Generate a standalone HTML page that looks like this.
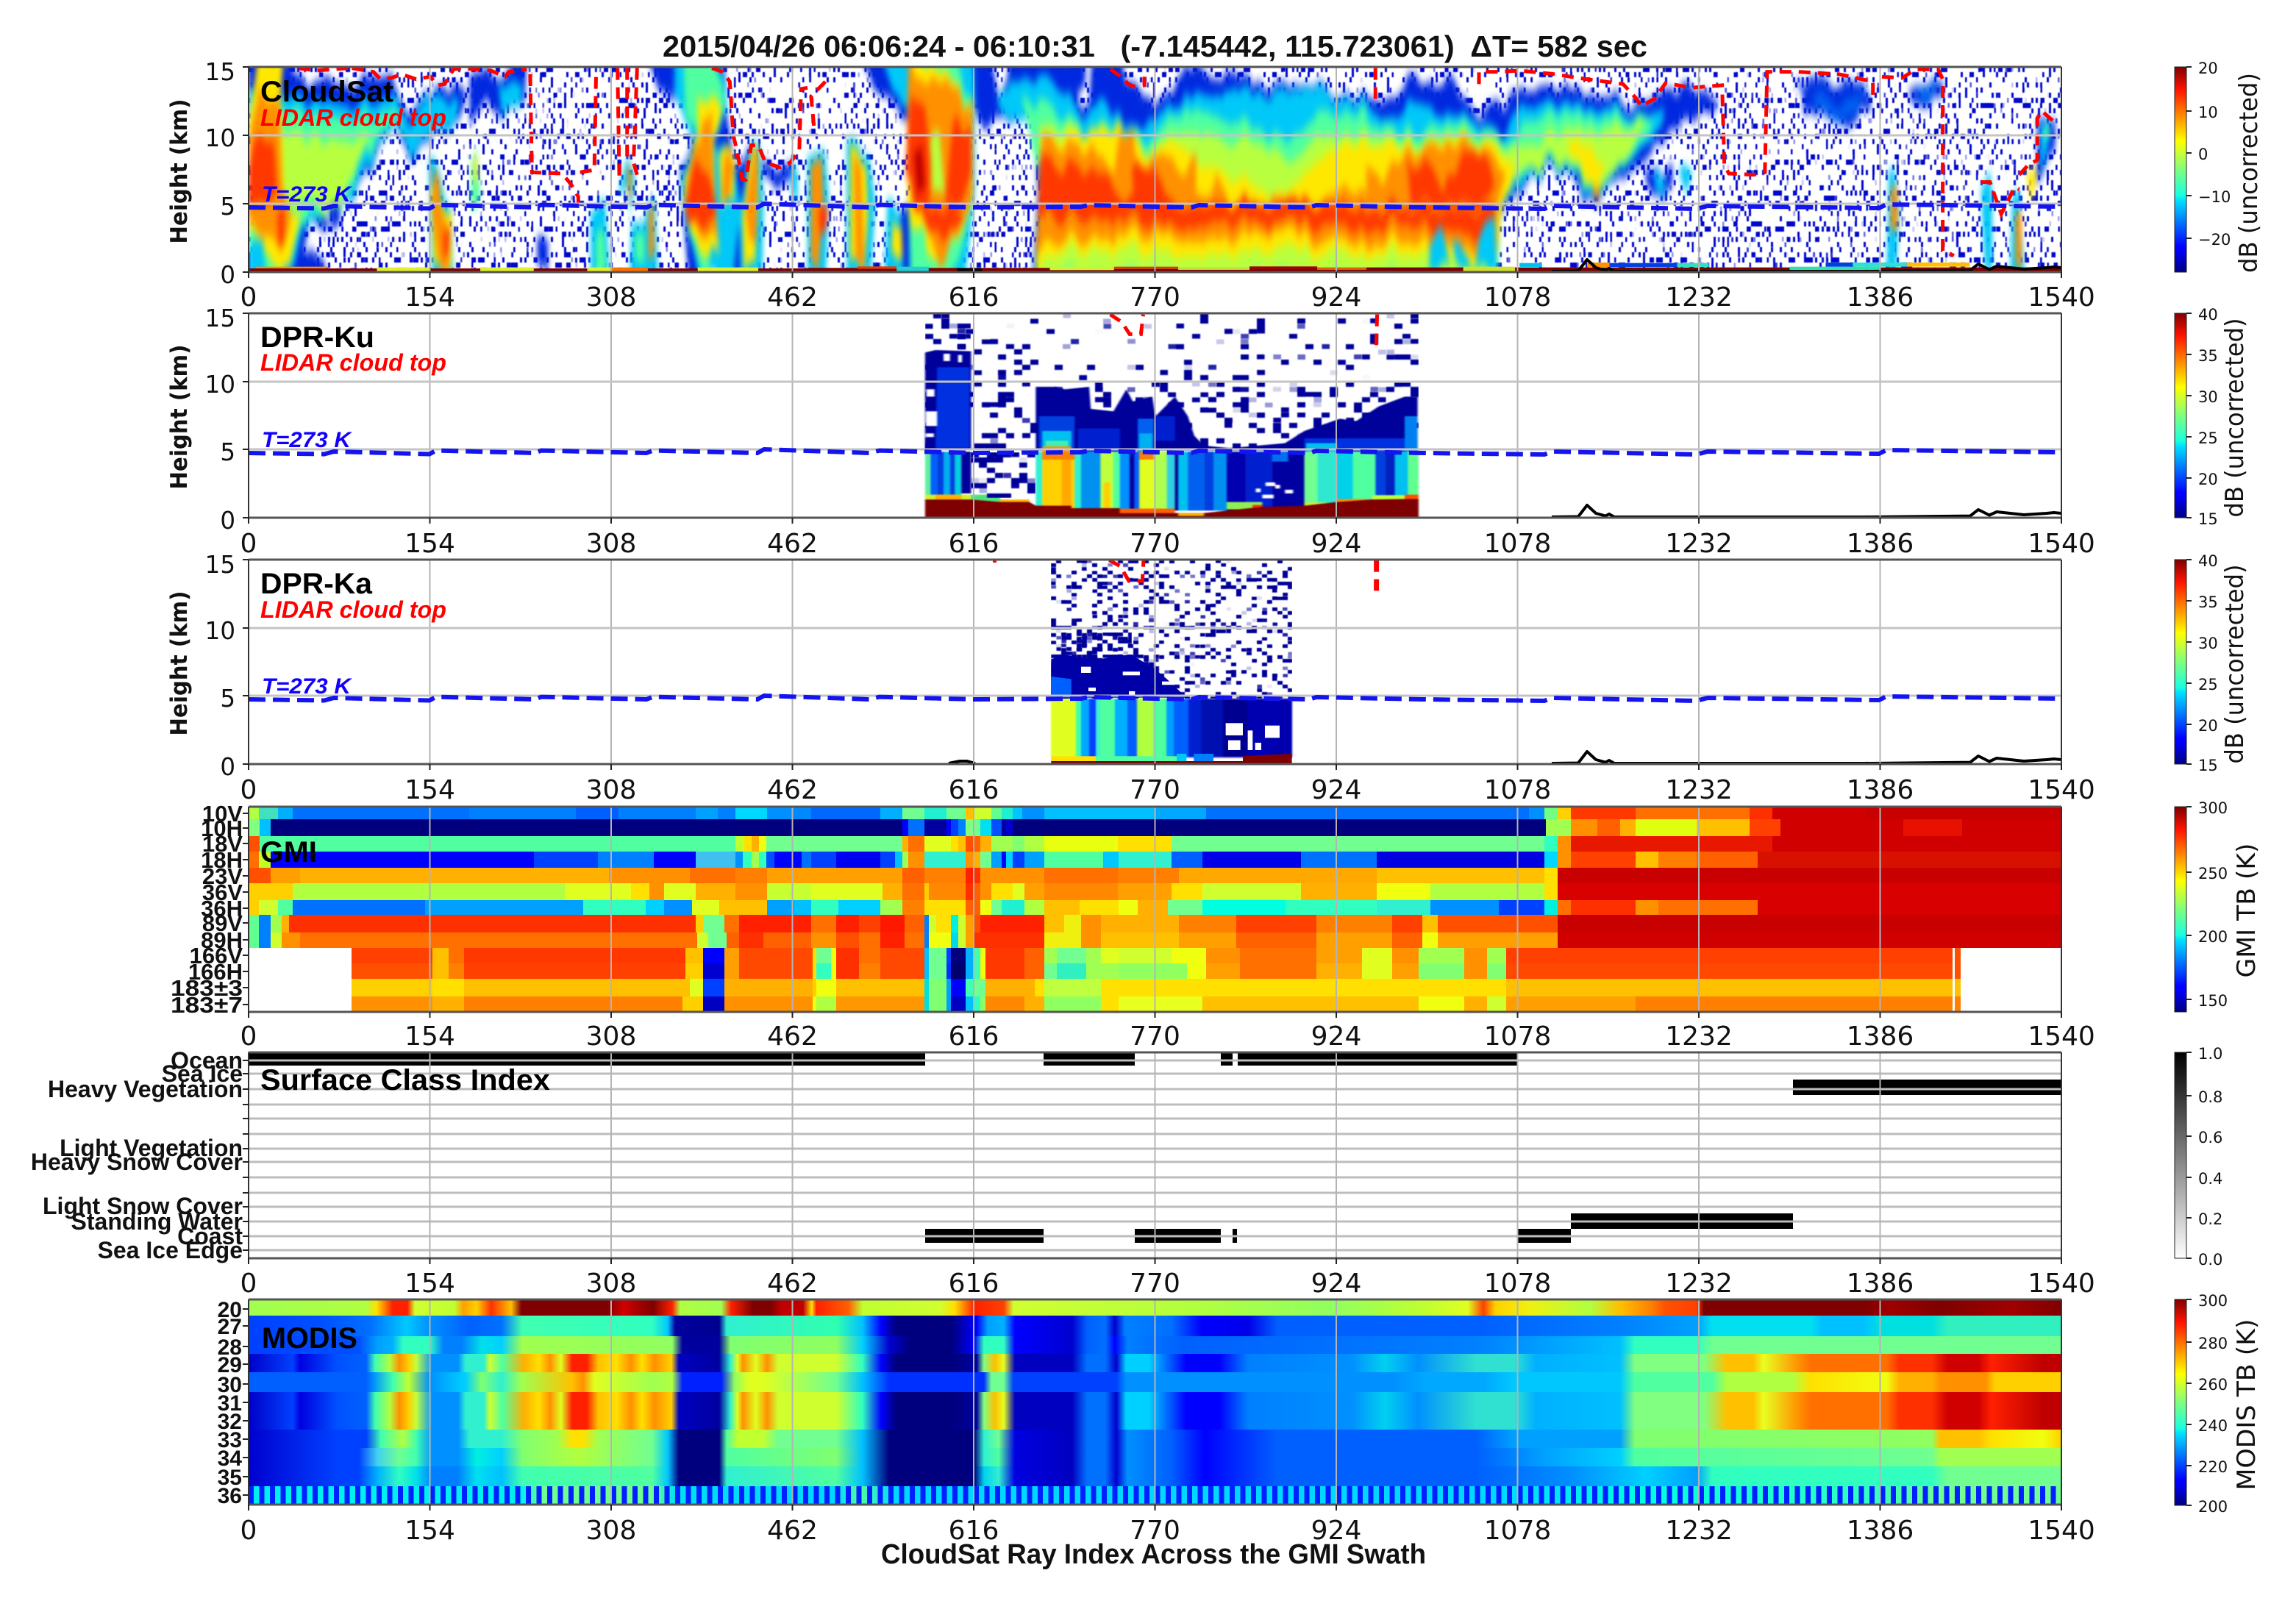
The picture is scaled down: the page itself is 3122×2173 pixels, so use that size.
<!DOCTYPE html>
<html><head><meta charset="utf-8"><title>CloudSat GMI</title>
<style>
html,body{margin:0;padding:0;background:#fff}
#p{position:relative;width:3122px;height:2173px;overflow:hidden;background:#fff}
.r{position:absolute;left:338px;width:2465px}
.x{position:absolute}
svg{position:absolute;left:0;top:0}
.m29{background:linear-gradient(90deg,#0000c8 0,#0040ff 60px,#0000e0 70px,#0050ff 120px,#0060ff 160px,#40ffb0 172px,#b0ff40 192px,#ff9000 205px,#ffd000 218px,#c0ff40 228px,#0090ff 250px,#0090ff 285px,#30f0d0 295px,#30f0d0 320px,#d0ff30 328px,#50ffa0 345px,#ffb000 375px,#ffe000 395px,#ff9000 410px,#e0ff20 425px,#ff2000 440px,#ff2000 460px,#ffc000 475px,#ffe000 500px,#ff9000 520px,#ffe000 535px,#ff9000 552px,#ffd000 575px,#0000c0 585px,#00009f 640px,#30f0d0 655px,#e0ff20 665px,#ff9000 672px,#e0ff20 690px,#ff9000 705px,#d0ff30 720px,#d0ff30 799px,#30ffc0 835px,#0000ff 860px,#00007f 880px,#00007f 956px,#00009f 990px,#80ff80 1000px,#ffc000 1015px,#e0ff20 1027px,#0000c0 1042px,#0000c0 1120px,#0070ff 1140px,#0070ff 1165px,#0000d0 1180px,#00d0ff 1193px,#00d0ff 1224px,#0000ff 1275px,#0000ff 1320px,#0080ff 1359px,#0090ff 1500px,#00d0f0 1545px,#0090ff 1590px,#30e0d0 1669px,#30e0d0 1721px,#00b0ff 1750px,#00c0ff 1865px,#80ff80 1885px,#80ff80 1979px,#ffc000 2010px,#ffc000 2046px,#e8ff20 2060px,#ff9000 2108px,#ff7000 2124px,#ff7000 2227px,#ff3000 2245px,#ff3000 2289px,#d00000 2310px,#d00000 2352px,#ff2000 2370px,#c00000 2440px,#c00000 2465px)}
.tk{font:36px "DejaVu Sans",sans-serif;fill:#111;text-anchor:middle}
.yt{font:32.5px "DejaVu Sans",sans-serif;fill:#111;text-anchor:end}
.cb{font:21px "DejaVu Sans",sans-serif;fill:#111}
.yl{font:bold 31px "DejaVu Sans",sans-serif;fill:#111;text-anchor:middle}
.cl{font:34px "DejaVu Sans",sans-serif;fill:#111;text-anchor:middle}
.bl{font:bold 40px "Liberation Sans",sans-serif;fill:#000}
.li{font:italic bold 32px "Liberation Sans",sans-serif;fill:#f00}
.tt{font:italic bold 30px "Liberation Sans",sans-serif;fill:#10f}
.gl{font:bold 31px "Liberation Sans",sans-serif;fill:#111;text-anchor:end}
.sl{font:bold 32px "Liberation Sans",sans-serif;fill:#111;text-anchor:end}
.ml{font:bold 30px "Liberation Sans",sans-serif;fill:#111;text-anchor:end}
.B{fill:#0028e0}.C{fill:#00c8f8}.G{fill:#50ffa0}.L{fill:#b8ff40}.Y{fill:#ffe800}.O{fill:#ff9000}.R{fill:#ff3800}.D{fill:#c00000}
.rd{fill:none;stroke:#f00;stroke-width:5;stroke-dasharray:16 10;vector-effect:non-scaling-stroke}
.k{fill:#7f0000}
</style></head><body><div id="p">

<!-- GMI -->
<div class="r" style="top:1097px;height:17px;background:linear-gradient(90deg,#b0ff40 0 14px,#40e0c0 0 40px,#00b0ff 0 60px,#0070ff 0 300px,#0080ff 0 445px,#0060ff 0 503px,#0080ff 0 608px,#00a0ff 0 638px,#0080ff 0 662px,#00d8ff 0 705px,#0090ff 0 739px,#0088ff 0 765px,#0068ff 0 859px,#00b0ff 0 889px,#70ff90 0 919px,#20f0d0 0 949px,#70ff90 0 975px,#ffc000 0 987px,#d0ff30 0 1010px,#60ff90 0 1024px,#20f0d0 0 1039px,#00c8ff 0 1052px,#0090ff 0 1082px,#00c0ff 0 1234px,#00a8ff 0 1302px,#0070ff 0 1741px,#0090ff 0 1762px,#70ff80 0 1780px,#ffd000 0 1798px,#ff3800 0 1886px,#ff7000 0 2041px,#ff3000 0 2072px,#d00000 0 2200px,#c80000 0 2465px)"></div>
<div class="r" style="top:1114px;height:23px;background:linear-gradient(90deg,#80ff80 0 15px,#00c0ff 0 30px,#00007f 0 889px,#0000ff 0 897px,#0070ff 0 919px,#00009f 0 949px,#0000ff 0 955px,#0040ff 0 965px,#0080ff 0 975px,#80ff80 0 987px,#70ff90 0 995px,#00e0f0 0 1010px,#0050ff 0 1024px,#00009f 0 1030px,#0000d0 0 1039px,#00007f 0 1764px,#a0ff50 0 1798px,#ff9000 0 1834px,#ff6000 0 1865px,#ffb000 0 1886px,#e0ff10 0 1969px,#ffc000 0 2041px,#ff4000 0 2083px,#d00000 0 2250px,#e81000 0 2330px,#d00000 0 2465px)"></div>
<div class="r" style="top:1137px;height:21px;background:linear-gradient(90deg,#ff5000 0 15px,#50ffa0 0 662px,#c0ff30 0 674px,#ffe000 0 684px,#ffb000 0 694px,#f0ff10 0 704px,#70ff90 0 889px,#ffb000 0 897px,#ff7000 0 919px,#e0ff20 0 955px,#ffe000 0 965px,#ffc000 0 975px,#ff5000 0 987px,#ff6000 0 995px,#ffb000 0 1010px,#a0ff50 0 1039px,#80ff70 0 1055px,#b0ff40 0 1082px,#e8ff10 0 1182px,#ffe000 0 1255px,#70ff90 0 1762px,#30ffc0 0 1780px,#ff9000 0 1798px,#e81800 0 2072px,#d00000 0 2465px)"></div>
<div class="r" style="top:1158px;height:22px;background:linear-gradient(90deg,#ff7000 0 14px,#c0ff20 0 30px,#0000ff 0 388px,#0040ff 0 475px,#0080ff 0 551px,#0000ff 0 608px,#40c0f0 0 662px,#0090ff 0 672px,#30ffc0 0 684px,#a0ff50 0 694px,#30ffc0 0 704px,#0050ff 0 715px,#0000ff 0 752px,#0070ff 0 765px,#0040ff 0 799px,#0000f0 0 859px,#0040ff 0 879px,#00c0ff 0 889px,#a0ff50 0 897px,#ff9000 0 919px,#30f0d0 0 975px,#ff9000 0 987px,#ffb000 0 995px,#70ff90 0 1010px,#00a0ff 0 1024px,#0000ff 0 1030px,#00d0ff 0 1039px,#0040ff 0 1055px,#00a0ff 0 1082px,#50ffa0 0 1162px,#00c8ff 0 1183px,#30f0d0 0 1255px,#0060ff 0 1297px,#0000e8 0 1431px,#0070ff 0 1534px,#0000e0 0 1762px,#00d8ff 0 1780px,#ff9000 0 1798px,#ff4000 0 1886px,#ffc000 0 1917px,#ff8000 0 1969px,#ff6000 0 2052px,#d81000 0 2465px)"></div>
<div class="r" style="top:1180px;height:21px;background:linear-gradient(90deg,#ff5000 0 30px,#ffa000 0 70px,#ffb000 0 490px,#ff9000 0 600px,#ff7000 0 662px,#ff8000 0 705px,#ffa000 0 889px,#ff6000 0 919px,#ff8000 0 975px,#ff2000 0 987px,#ff3000 0 995px,#ff9000 0 1082px,#ff7000 0 1182px,#ff8000 0 1265px,#ffa800 0 1534px,#ffc000 0 1762px,#ffe000 0 1780px,#c80000 0 2465px)"></div>
<div class="r" style="top:1201px;height:23px;background:linear-gradient(90deg,#ffd000 0 60px,#b0ff40 0 430px,#e0ff20 0 520px,#ffe000 0 545px,#ff9000 0 565px,#e0ff20 0 608px,#ffb000 0 662px,#ff9000 0 705px,#c8ff30 0 765px,#e0ff20 0 862px,#ffb000 0 889px,#ff7000 0 919px,#ffd000 0 925px,#ff8800 0 975px,#ff3000 0 987px,#ff6000 0 995px,#ff9000 0 1010px,#ffe000 0 1039px,#e0ff20 0 1055px,#ffa000 0 1082px,#ff8800 0 1182px,#ffa000 0 1255px,#ffe000 0 1297px,#d0ff30 0 1431px,#ffb000 0 1534px,#f0ff10 0 1607px,#b0ff40 0 1762px,#ffe000 0 1780px,#d80000 0 2465px)"></div>
<div class="r" style="top:1224px;height:20px;background:linear-gradient(90deg,#ffd000 0 14px,#d0ff30 0 40px,#50ffa0 0 60px,#0070ff 0 240px,#00a0ff 0 455px,#30ffc0 0 540px,#00d0ff 0 565px,#0090ff 0 603px,#e0ff20 0 640px,#ffc000 0 705px,#00a0ff 0 742px,#00c0ff 0 765px,#30ffc0 0 802px,#00d0ff 0 859px,#a0ff50 0 889px,#ff8000 0 919px,#ffe000 0 975px,#ff6000 0 995px,#f0ff10 0 1010px,#70ff90 0 1024px,#20f0d0 0 1055px,#b0ff40 0 1082px,#ffc000 0 1130px,#ffe000 0 1183px,#f0ff10 0 1209px,#ffb000 0 1250px,#70ff90 0 1297px,#00ffe0 0 1410px,#30ffc0 0 1534px,#30f0d0 0 1607px,#0090ff 0 1700px,#0040ff 0 1762px,#00f0e0 0 1780px,#ff7000 0 1798px,#ff3000 0 1886px,#ff9000 0 1917px,#ff7000 0 2052px,#d80000 0 2465px)"></div>
<div class="r" style="top:1244px;height:24px;background:linear-gradient(90deg,#60ff90 0 14px,#0080ff 0 30px,#a0ff50 0 45px,#ffb000 0 55px,#ff3000 0 608px,#ffd000 0 618px,#70ff90 0 647px,#ff7000 0 667px,#ff2000 0 765px,#ff7000 0 799px,#ff2000 0 830px,#ff4000 0 859px,#ff1800 0 892px,#ff6000 0 919px,#0080ff 0 925px,#d0ff30 0 935px,#ffe000 0 955px,#00f0e0 0 965px,#d0ff30 0 975px,#ffa000 0 987px,#ff5000 0 995px,#ff2000 0 1082px,#ffc000 0 1109px,#f0f010 0 1132px,#ff9000 0 1159px,#ffb000 0 1265px,#ff8000 0 1343px,#ff4000 0 1452px,#ff8000 0 1555px,#ff4000 0 1596px,#ffc000 0 1617px,#ff5000 0 1780px,#c80000 0 2465px)"></div>
<div class="r" style="top:1268px;height:21px;background:linear-gradient(90deg,#60ff90 0 14px,#0080ff 0 30px,#d0ff30 0 45px,#ff9000 0 70px,#ff7000 0 610px,#d0ff30 0 625px,#70ff90 0 650px,#ff6000 0 667px,#ff3000 0 700px,#ff6000 0 765px,#ff9000 0 799px,#ff5000 0 830px,#ff7000 0 859px,#ff2000 0 892px,#ff7000 0 919px,#0080ff 0 925px,#f0ff10 0 955px,#00d8f0 0 965px,#d0ff30 0 975px,#ffa000 0 987px,#ff3000 0 1082px,#f0f010 0 1132px,#ff9000 0 1159px,#ffc000 0 1265px,#ffa000 0 1343px,#ff6000 0 1452px,#ffa000 0 1555px,#ff6000 0 1596px,#f0ff10 0 1617px,#ffa000 0 1780px,#d00000 0 2465px)"></div>
<div class="r" style="top:1289px;height:21px;background:linear-gradient(90deg,#fff 0 140px,#ff4000 0 250px,#ffc000 0 272px,#ff7000 0 293px,#ff3800 0 594px,#ffc000 0 618px,#0000ff 0 647px,#ffa000 0 667px,#ff4800 0 767px,#ffe000 0 772px,#70ff90 0 792px,#f0ff10 0 799px,#ff3000 0 830px,#ff7000 0 859px,#ff4800 0 919px,#00c0ff 0 925px,#70ff90 0 949px,#0040ff 0 955px,#00007f 0 975px,#00b0ff 0 985px,#40ffb0 0 995px,#f0ff10 0 1002px,#ff3800 0 1055px,#ff6000 0 1082px,#a0ff50 0 1099px,#70ff90 0 1139px,#a0ff50 0 1159px,#e0ff20 0 1183px,#d0ff30 0 1255px,#f0ff10 0 1302px,#ff9000 0 1348px,#ff7000 0 1452px,#ffa000 0 1514px,#e0ff20 0 1555px,#ff9000 0 1591px,#a0ff50 0 1653px,#ff9000 0 1684px,#a0ff50 0 1710px,#ff4000 0 2317px,#fff 0 2320px,#ff5000 0 2328px,#fff 0 2465px)"></div>
<div class="r" style="top:1310px;height:21px;background:linear-gradient(90deg,#fff 0 140px,#ff5000 0 250px,#ffc000 0 272px,#ff8000 0 293px,#ff4000 0 594px,#ffd000 0 618px,#0000d0 0 647px,#ffa000 0 667px,#ff4800 0 767px,#ffe000 0 772px,#30ffc0 0 792px,#f0ff10 0 799px,#ff3000 0 830px,#ff8000 0 859px,#ff4800 0 919px,#00c0ff 0 925px,#70ff90 0 949px,#0030ff 0 955px,#00006f 0 975px,#00b0ff 0 985px,#40ffb0 0 995px,#f0ff10 0 1002px,#ff3800 0 1055px,#ff6000 0 1082px,#70ff90 0 1099px,#30f0c0 0 1139px,#a0ff50 0 1183px,#90ff60 0 1276px,#f0ff10 0 1302px,#ffa000 0 1348px,#ff7000 0 1452px,#ffb000 0 1514px,#e0ff20 0 1555px,#ffa000 0 1591px,#80ff70 0 1653px,#ff9000 0 1684px,#80ff70 0 1710px,#ff4800 0 2317px,#fff 0 2320px,#ff5000 0 2328px,#fff 0 2465px)"></div>
<div class="r" style="top:1331px;height:24px;background:linear-gradient(90deg,#fff 0 140px,#ffd000 0 250px,#ffe000 0 293px,#ffc000 0 600px,#e0ff20 0 618px,#0040ff 0 647px,#ffb000 0 767px,#ffd000 0 772px,#f0ff10 0 799px,#ffc000 0 919px,#00e0e0 0 925px,#80ff70 0 949px,#00a0ff 0 955px,#0000ff 0 975px,#40ffb0 0 985px,#70ff90 0 1002px,#ffb000 0 1069px,#ffe000 0 1082px,#c0ff40 0 1159px,#ffe000 0 1710px,#ffc000 0 2317px,#fff 0 2320px,#ffc000 0 2328px,#fff 0 2465px)"></div>
<div class="r" style="top:1355px;height:21px;background:linear-gradient(90deg,#fff 0 140px,#ff9000 0 250px,#ffb000 0 293px,#ff8000 0 590px,#ffd000 0 618px,#0000c0 0 647px,#ff9000 0 767px,#f0ff10 0 772px,#b0ff40 0 799px,#ff9800 0 919px,#00e0e0 0 925px,#80ff70 0 949px,#00a0ff 0 955px,#0000c0 0 975px,#00c0ff 0 985px,#30ffc0 0 995px,#90ff60 0 1002px,#ff8800 0 1055px,#ffb000 0 1082px,#90ff60 0 1159px,#ffe000 0 1183px,#e8ff20 0 1297px,#ffc000 0 1591px,#f0ff10 0 1653px,#ffb000 0 1684px,#d0ff30 0 1710px,#ffa000 0 1886px,#ff8000 0 2317px,#fff 0 2320px,#ff8000 0 2328px,#fff 0 2465px)"></div>

<!-- MODIS -->
<div class="r" style="top:1767px;height:22px;background:linear-gradient(90deg,#a0ff50 0,#b0ff40 160px,#ffe000 174px,#ff2000 196px,#ff2000 216px,#d0ff30 226px,#c0ff30 280px,#ffa000 292px,#ffd000 310px,#ff3000 330px,#ffc000 357px,#7f0000 371px,#7f0000 487px,#d00000 510px,#7f0000 550px,#ff2000 576px,#b0ff40 587px,#a0ff50 643px,#ff2000 656px,#7f0000 686px,#7f0000 710px,#c00000 725px,#c00000 754px,#ffe000 766px,#ff2000 772px,#ff6000 816px,#c0ff30 835px,#d0ff30 940px,#ffe000 960px,#ff2000 987px,#ff4000 1027px,#d0ff30 1040px,#b0ff40 1300px,#90ff60 1472px,#c0ff30 1600px,#e0ff20 1658px,#ff4000 1679px,#ffd000 1695px,#f0f010 1740px,#b0ff40 1824px,#ffc000 1865px,#ff8000 1907px,#ff5000 1927px,#ff4000 1969px,#7f0000 1979px,#7f0000 2200px,#a00000 2230px,#7f0000 2300px,#a00000 2400px,#7f0000 2465px)"></div>
<div class="r" style="top:1789px;height:28px;background:linear-gradient(90deg,#0040ff 0,#0050ff 100px,#0070ff 165px,#00a8ff 196px,#00c8ff 215px,#0090ff 246px,#0060ff 300px,#0070ff 344px,#40ffb0 372px,#30ffc0 549px,#00c8ff 570px,#00009f 580px,#00008f 640px,#30f0d0 650px,#30ffb0 799px,#00c0ff 835px,#0000ff 860px,#00007f 880px,#00007f 956px,#0000ff 990px,#00a0ff 1005px,#00b0ff 1027px,#0000ff 1042px,#0000d0 1120px,#0060ff 1140px,#0070ff 1165px,#0000d0 1178px,#0080ff 1192px,#0070ff 1255px,#0000ff 1296px,#0000e8 1359px,#0060ff 1400px,#0060ff 1679px,#0080ff 1865px,#00a0ff 1969px,#00e0f0 1990px,#00e0f0 2124px,#00c0ff 2140px,#00c0ff 2196px,#00e0e0 2220px,#00e0e0 2289px,#30f0c0 2310px,#30f0c0 2465px)"></div>
<div class="r" style="top:1817px;height:24px;background:linear-gradient(90deg,#0040ff 0,#0050ff 150px,#00a0ff 175px,#00b0ff 196px,#30ffc0 210px,#30ffc0 246px,#0080ff 265px,#0080ff 290px,#00e0e8 317px,#00d0ff 344px,#a0ff50 372px,#90ff60 576px,#00009f 590px,#00009f 640px,#80ff70 655px,#90ff60 799px,#00d0ff 835px,#0000d0 871px,#00007f 900px,#00007f 956px,#0000ff 987px,#30ffc0 1000px,#30ffc0 1027px,#0000ff 1042px,#0000d0 1120px,#0060ff 1140px,#0070ff 1165px,#0000ff 1178px,#0080ff 1195px,#0060ff 1270px,#0080ff 1669px,#00c0ff 1865px,#30ffc0 1885px,#30ffc0 1969px,#70ff90 1990px,#70ff90 2465px)"></div>
<div class="r m29" style="top:1841px;height:25px"></div>
<div class="r" style="top:1866px;height:27px;background:linear-gradient(90deg,#0060ff 0,#0060ff 160px,#0090ff 170px,#40ffb0 196px,#c0ff30 218px,#0090ff 246px,#00d0ff 295px,#80ff70 317px,#30f0d0 344px,#a0ff50 371px,#ffc000 440px,#ff9000 455px,#e0ff20 470px,#a0ff50 549px,#b0ff40 576px,#0020ff 590px,#0020ff 643px,#90ff60 661px,#e0ff20 680px,#e0ff20 700px,#70ff90 799px,#00c0ff 835px,#0030ff 871px,#0030ff 1000px,#70ff90 1010px,#70ff90 1027px,#0040ff 1040px,#0040ff 1180px,#0090ff 1193px,#0090ff 1555px,#00a8ff 1600px,#00a8ff 1679px,#00c8ff 1720px,#00c8ff 1865px,#50ffa0 1885px,#50ffa0 1990px,#b0ff40 2010px,#b0ff40 2100px,#ffe000 2124px,#f0ff10 2227px,#ffb000 2245px,#ffb000 2289px,#ff9000 2300px,#ff9000 2362px,#ffd000 2375px,#ffd000 2465px)"></div>
<div class="r m29" style="top:1893px;height:25px"></div>
<div class="r m29" style="top:1918px;height:26px"></div>
<div class="r" style="top:1944px;height:25px;background:linear-gradient(90deg,#0000d0 0,#0040ff 120px,#0040ff 160px,#40ffb0 180px,#b0ff40 210px,#40ffb0 228px,#0090ff 250px,#0090ff 285px,#30f0d0 300px,#30f0d0 344px,#80ff70 372px,#a0ff50 420px,#ffe000 440px,#ffe000 455px,#a0ff50 475px,#70ff90 549px,#00c8ff 570px,#00007f 585px,#00007f 640px,#50ffa0 650px,#c0ff30 665px,#c0ff30 700px,#70ff90 720px,#70ff90 799px,#00c0ff 835px,#00007f 871px,#00007f 987px,#30f0d0 1000px,#70ff90 1020px,#0000e0 1042px,#0000c0 1120px,#0070ff 1140px,#0070ff 1165px,#0000d0 1180px,#0090ff 1195px,#0060ff 1255px,#0000ff 1300px,#0060ff 1400px,#0060ff 1669px,#00a0ff 1720px,#00a0ff 1865px,#80ff70 1885px,#90ff60 2289px,#ffc000 2300px,#ffc000 2352px,#ffe000 2370px,#f0ff10 2440px,#ffd000 2465px)"></div>
<div class="r" style="top:1969px;height:25px;background:linear-gradient(90deg,#0000d0 0,#0040ff 120px,#0040ff 150px,#40d0f0 175px,#70ff90 205px,#40ffb0 228px,#0090ff 250px,#0090ff 285px,#00f0e0 310px,#00d0ff 344px,#80ff70 372px,#a0ff50 420px,#b0ff40 450px,#70ff90 549px,#00c8ff 570px,#00007f 585px,#00007f 640px,#50ffa0 650px,#80ff70 799px,#00c0ff 835px,#00007f 871px,#00007f 987px,#30f0d0 1000px,#50ffa0 1020px,#0000e0 1042px,#0000c0 1120px,#0070ff 1140px,#0070ff 1165px,#0000d0 1180px,#0090ff 1195px,#0060ff 1255px,#0000ff 1300px,#0060ff 1400px,#0060ff 1669px,#00a0ff 1760px,#00d0ff 1865px,#50ffa0 1885px,#70ff90 2289px,#a0ff50 2300px,#a0ff50 2465px)"></div>
<div class="r" style="top:1994px;height:27px;background:linear-gradient(90deg,#0000d0 0,#0040ff 120px,#0040ff 150px,#00b0ff 175px,#30ffc0 205px,#00e0e8 228px,#0080ff 250px,#0080ff 285px,#00e0f0 310px,#00c0ff 344px,#40ffb0 372px,#50ffa0 549px,#00c8ff 570px,#00007f 585px,#00007f 640px,#30f0d0 650px,#50ffa0 799px,#00c0ff 835px,#00007f 871px,#00007f 987px,#00d0f0 1000px,#30f0d0 1020px,#0000e0 1042px,#0000c0 1120px,#0070ff 1140px,#0070ff 1165px,#0000d0 1180px,#0090ff 1195px,#0060ff 1255px,#0000ff 1300px,#0060ff 1400px,#0060ff 1669px,#0090ff 1800px,#00d0ff 1900px,#00a0ff 1969px,#30ffc0 1990px,#30ffc0 2289px,#70ff90 2310px,#70ff90 2465px)"></div>
<div class="r" style="top:2021px;height:25px;background:repeating-linear-gradient(90deg,#0020ff 0 7px,transparent 7px 14.5px),linear-gradient(90deg,#00f0f0 0,#00f0f0 371px,#70ff90 400px,#70ff90 549px,#00e0f0 580px,#00d8ff 800px,#50ffa0 830px,#00d8ff 880px,#00d8ff 1700px,#00ffe0 1900px,#30ffc0 2200px,#70ff90 2300px,#70ff90 2465px)"></div>

<!-- DPR-Ka columns -->
<div class="x" style="left:1429px;top:950px;width:328px;height:80px;filter:blur(1px);background:linear-gradient(90deg,#e0ff20 0 34px,#40ffb0 0 41px,#00a8ff 0 52px,#0040ff 0 61px,#40f0d0 0 67px,#50ffa0 0 87px,#00b0ff 0 104px,#0060ff 0 117px,#b0ff40 0 139px,#50ffa0 0 157px,#00a0ff 0 167px,#0060ff 0 187px,#0020d0 0 204px,#0010b0 0 234px,#000090 0 267px,#0000b0 0 328px)"></div>

<svg width="3122" height="2173" viewBox="0 0 3122 2173" xmlns="http://www.w3.org/2000/svg">
<defs>
<clipPath id="c1"><rect x="338" y="91" width="2465" height="279"/></clipPath>
<clipPath id="c2"><rect x="338" y="426" width="2465" height="278"/></clipPath>
<clipPath id="c3"><rect x="338" y="761" width="2465" height="278"/></clipPath>
<linearGradient id="jet" x1="0" y1="1" x2="0" y2="0">
<stop offset="0" stop-color="#00007f"/><stop offset=".11" stop-color="#0000ff"/><stop offset=".125" stop-color="#0000ff"/><stop offset=".35" stop-color="#00e0ff"/><stop offset=".375" stop-color="#19ffdf"/><stop offset=".5" stop-color="#7fff7f"/><stop offset=".64" stop-color="#ffff00"/><stop offset=".66" stop-color="#ffea00"/><stop offset=".89" stop-color="#ff1300"/><stop offset="1" stop-color="#7f0000"/>
</linearGradient>
<linearGradient id="gry" x1="0" y1="1" x2="0" y2="0"><stop offset="0" stop-color="#fff"/><stop offset="1" stop-color="#000"/></linearGradient>
<filter id="b1" filterUnits="userSpaceOnUse" x="300" y="20" width="2560" height="420" color-interpolation-filters="sRGB">
<feTurbulence type="fractalNoise" baseFrequency=".06 .004" numOctaves="2" seed="4"/>
<feColorMatrix type="matrix" values="1 0 0 0 0 0 0 0 0 .5 0 0 1 0 0 0 0 0 0 1" result="t"/>
<feDisplacementMap in="SourceGraphic" in2="t" scale="55" xChannelSelector="G" yChannelSelector="R"/>
<feGaussianBlur stdDeviation="3.5 7"/>
</filter>
<filter id="b3" filterUnits="userSpaceOnUse" x="1240" y="420" width="710" height="290" color-interpolation-filters="sRGB"><feGaussianBlur stdDeviation="1.2 .8"/></filter>

<filter id="sp1" x="0" y="0" width="1" height="1" color-interpolation-filters="sRGB">
<feTurbulence type="fractalNoise" baseFrequency=".27 .12" numOctaves="1" seed="5" result="n"/>
<feColorMatrix in="n" type="matrix" values="0 0 0 0 0 0 0 0 0 .03 0 0 0 0 .8 40 0 0 0 -24.4" result="t"/>
<feFlood x="1" y="3" width="1" height="1" flood-color="#000"/><feComposite width="3" height="7"/><feTile result="a"/>
<feComposite in="t" in2="a" operator="in"/><feMorphology operator="dilate" radius="1 3"/><feGaussianBlur stdDeviation=".5"/>
</filter>
<filter id="sp2" x="0" y="0" width="1" height="1" color-interpolation-filters="sRGB">
<feTurbulence type="fractalNoise" baseFrequency=".13 .21" numOctaves="1" seed="11" result="n"/>
<feColorMatrix in="n" type="matrix" values="0 0 0 0 0 0 0 0 0 0 0 0 0 0 .6 40 0 0 0 -25.8" result="t"/>
<feFlood x="5" y="3" width="1" height="1" flood-color="#000"/><feComposite width="11" height="7"/><feTile result="a"/>
<feComposite in="t" in2="a" operator="in"/><feMorphology operator="dilate" radius="5 3"/><feGaussianBlur stdDeviation=".7"/>
</filter>
<filter id="sp2m" x="0" y="0" width="1" height="1" color-interpolation-filters="sRGB">
<feTurbulence type="fractalNoise" baseFrequency=".13 .21" numOctaves="1" seed="17" result="n"/>
<feColorMatrix in="n" type="matrix" values="0 0 0 0 0 0 0 0 0 0 0 0 0 0 .6 40 0 0 0 -23.6" result="t"/>
<feFlood x="5" y="3" width="1" height="1" flood-color="#000"/><feComposite width="11" height="7"/><feTile result="a"/>
<feComposite in="t" in2="a" operator="in"/><feMorphology operator="dilate" radius="5 3"/><feGaussianBlur stdDeviation=".7"/>
</filter>
<filter id="sp2d" x="0" y="0" width="1" height="1" color-interpolation-filters="sRGB">
<feTurbulence type="fractalNoise" baseFrequency=".13 .21" numOctaves="1" seed="23" result="n"/>
<feColorMatrix in="n" type="matrix" values="0 0 0 0 0 0 0 0 0 0 0 0 0 0 .6 40 0 0 0 -22" result="t"/>
<feFlood x="5" y="3" width="1" height="1" flood-color="#000"/><feComposite width="11" height="7"/><feTile result="a"/>
<feComposite in="t" in2="a" operator="in"/><feMorphology operator="dilate" radius="5 3"/><feGaussianBlur stdDeviation=".7"/>
</filter>
<filter id="sp3" x="0" y="0" width="1" height="1" color-interpolation-filters="sRGB">
<feTurbulence type="fractalNoise" baseFrequency=".17 .23" numOctaves="1" seed="7" result="n"/>
<feColorMatrix in="n" type="matrix" values="0 0 0 0 0 0 0 0 0 0 0 0 0 0 .6 40 0 0 0 -23.4" result="t"/>
<feFlood x="3" y="2" width="1" height="1" flood-color="#000"/><feComposite width="7" height="5"/><feTile result="a"/>
<feComposite in="t" in2="a" operator="in"/><feMorphology operator="dilate" radius="3 2"/><feGaussianBlur stdDeviation=".6"/>
</filter>
<filter id="sp3d" x="0" y="0" width="1" height="1" color-interpolation-filters="sRGB">
<feTurbulence type="fractalNoise" baseFrequency=".17 .23" numOctaves="1" seed="31" result="n"/>
<feColorMatrix in="n" type="matrix" values="0 0 0 0 0 0 0 0 0 0 0 0 0 0 .6 40 0 0 0 -21" result="t"/>
<feFlood x="3" y="2" width="1" height="1" flood-color="#000"/><feComposite width="7" height="5"/><feTile result="a"/>
<feComposite in="t" in2="a" operator="in"/><feMorphology operator="dilate" radius="3 2"/><feGaussianBlur stdDeviation=".6"/>
</filter>
</defs>

<!-- CLOUDSAT PANEL -->
<g clip-path="url(#c1)">
<g transform="translate(338,91)"><rect width="2465" height="279" fill="#0000d8" filter="url(#sp1)"/></g>
<g filter="url(#b1)">
<!-- region A -->
<g transform="translate(338,91) scale(.4847,.3333)">
<polygon class="B" points="0,-60 110,-60 130,40 400,50 410,130 440,160 510,120 540,100 610,110 600,200 590,260 520,270 510,320 470,360 440,320 410,285 370,320 340,400 310,500 290,560 210,570 230,640 170,660 155,760 215,800 215,880 0,880"/>
<polygon class="B" points="620,30 700,60 760,-60 780,-60 775,150 700,190 620,190"/>
<polygon class="C" points="700,70 755,50 770,100 760,160 710,170"/>
<polygon class="C" points="0,60 30,110 400,150 450,200 510,130 590,160 585,250 520,265 500,320 465,340 440,290 410,280 360,320 330,410 300,520 280,570 215,570 190,640 150,680 130,780 95,880 0,880"/>
<polygon class="G" points="90,180 400,210 440,250 360,280 330,350 300,450 270,560 210,580 170,620 130,700 110,800 80,880 0,880 0,650 30,570 90,560"/>
<polygon class="L" points="90,280 340,300 300,420 270,520 250,560 100,560"/>
<polygon class="Y" points="30,-60 100,-60 90,100 95,280 100,560 150,600 130,680 110,810 60,810 30,720 0,640 0,200"/>
<polygon class="O" points="30,100 85,110 90,300 95,500 120,580 100,720 30,700 0,600 0,280"/>
<polygon class="R" points="20,280 70,280 80,500 60,560 0,560 0,400"/>
<polygon class="R" points="80,570 100,570 100,720 85,720"/>
<polygon class="C" points="0,720 40,720 50,880 0,880"/>
<polygon class="B" points="225,570 260,570 250,660 235,660"/>
<polygon class="C" points="505,390 520,390 570,560 575,880 515,880"/>
<polygon class="Y" points="510,500 570,570 570,800 520,810"/>
<polygon class="O" points="520,430 535,470 540,560 568,620 560,790 530,790 515,600"/>
<polygon class="R" points="545,620 565,640 560,730 548,730"/>
<polygon class="G" points="625,330 640,330 650,550 625,550"/>
<polygon class="Y" points="632,350 640,350 642,450 632,450"/>
<polygon class="B" points="810,680 840,680 840,800 810,800"/>
<polygon class="C" points="960,570 1000,570 1015,880 960,880"/>
<polygon class="G" points="975,700 995,700 1005,880 975,880"/>
<polygon class="C" points="1040,440 1060,390 1085,430 1075,580 1070,620 1060,500 1040,470"/>
<polygon class="O" points="1062,430 1075,430 1072,560 1065,560"/>
<polygon class="C" points="1115,560 1140,560 1150,880 1070,880 1075,640 1110,640"/>
<polygon class="O" points="1122,590 1135,590 1138,800 1122,800"/>
<polygon class="G" points="1085,680 1110,680 1110,810 1085,810"/>
<polygon class="B" points="1110,-60 1190,-60 1190,130 1150,90"/>
<polygon class="B" points="1190,-60 1320,-60 1340,60 1340,180 1350,290 1370,400 1400,340 1430,330 1440,570 1430,880 1235,880 1215,570 1210,430 1230,360 1245,270 1215,150 1190,80"/>
<polygon class="C" points="1195,-60 1300,-60 1335,60 1345,180 1300,290 1330,320 1360,360 1380,570 1360,880 1270,880 1235,700 1215,570 1215,450 1250,290 1215,160 1195,80"/>
<polygon class="G" points="1220,-60 1300,-60 1330,90 1335,170 1305,270 1310,560 1290,880 1240,700 1220,560 1225,450 1260,280 1225,160"/>
<polygon class="Y" points="1260,100 1310,110 1330,170 1305,270 1310,560 1320,770 1290,780 1245,700 1222,580 1225,440 1260,280"/>
<polygon class="O" points="1275,170 1300,180 1300,300 1310,570 1315,720 1240,650 1225,570 1235,410 1265,290"/>
<polygon class="R" points="1260,380 1285,400 1310,560 1310,640 1230,640 1225,570 1240,450"/>
<polygon class="Y" points="1320,340 1365,350 1360,560 1325,560"/>
<polygon class="O" points="1335,380 1358,390 1350,560 1328,540"/>
<polygon class="C" points="1410,320 1435,320 1445,570 1440,880 1380,880 1375,570"/>
<polygon class="Y" points="1412,340 1430,340 1430,560 1420,800 1390,790 1385,570"/>
<polygon class="O" points="1418,360 1428,360 1425,700 1405,700 1395,570"/>
<polygon class="B" points="1440,400 1530,410 1530,470 1450,470"/>
<polygon class="C" points="1522,410 1540,410 1540,560 1522,560"/>
</g>
<!-- region B -->
<g transform="translate(1098,91) scale(.4847,.3333)">
<polygon class="B" points="150,-60 290,-60 290,240 250,180 190,100"/>
<polygon class="C" points="200,-60 290,-60 285,190 240,120"/>
<polygon class="C" points="0,330 50,340 60,560 50,880 0,880"/>
<polygon class="O" points="10,370 40,370 45,570 30,815 10,815"/>
<polygon class="R" points="30,570 60,570 50,680 35,680"/>
<polygon class="C" points="110,320 170,340 190,560 175,880 110,880"/>
<polygon class="Y" points="120,360 165,370 170,570 160,810 120,810"/>
<polygon class="O" points="130,400 150,400 160,800 135,800"/>
<polygon class="C" points="225,570 285,570 285,880 215,880"/>
<polygon class="Y" points="240,640 275,640 275,780 235,780"/>
<polygon class="B" points="262,570 290,570 290,880 270,880"/>
<polygon class="C" points="280,-60 470,-60 470,560 440,880 285,880 285,560"/>
<polygon class="G" points="290,-60 400,-60 465,140 465,560 400,880 295,880 280,560"/>
<polygon class="Y" points="290,-60 350,20 465,150 465,560 370,800 300,700 280,560 285,200"/>
<polygon class="O" points="285,-60 300,50 400,110 460,150 462,560 440,600 370,800 340,650 300,560 275,440"/>
<polygon class="R" points="290,140 330,180 345,400 340,570 300,570 290,460 275,430"/>
<polygon class="D" points="298,350 320,350 330,500 310,520"/>
<polygon class="L" points="345,300 370,300 385,510 350,510"/>
<polygon class="R" points="410,250 460,230 460,440 420,560 385,560"/>
<polygon class="R" points="300,570 440,570 400,680 340,650 320,570"/>
<polygon class="G" points="290,650 330,650 340,880 290,880"/>
<polygon class="B" points="465,-60 510,-60 535,130 560,60 570,-60 780,-60 780,50 760,100 760,150 790,130 800,-60 880,-60 900,80 970,120 1020,150 1040,30 1200,50 1350,70 1568,120 1568,880 630,880 645,480 640,310 610,230 480,220 470,160"/>
<polygon class="C" points="530,130 590,60 640,50 720,80 760,190 830,140 860,180 930,260 960,190 1020,190 1070,150 1150,120 1250,100 1400,90 1568,140 1568,880 635,880 650,400 640,300 610,230 545,210"/>
<polygon class="G" points="600,130 720,190 780,250 840,220 900,250 950,290 1020,230 1100,200 1200,230 1280,260 1350,290 1450,190 1568,180 1568,880 640,880 650,400 620,260"/>
<polygon class="L" points="650,270 720,230 800,280 900,270 950,330 1020,300 1100,290 1300,320 1360,390 1420,300 1568,270 1568,850 640,850 650,400"/>
<polygon class="Y" points="655,300 760,260 880,240 920,300 960,340 1010,330 1060,350 1100,410 1180,430 1220,470 1280,500 1350,520 1420,400 1500,320 1568,300 1568,740 1400,750 1200,760 1000,750 760,750 640,780 650,500"/>
<polygon class="O" points="660,290 700,310 800,320 860,420 880,260 915,260 920,400 960,360 1000,370 1050,450 1090,370 1090,520 1130,520 1150,450 1180,540 1280,560 1300,510 1330,545 1450,540 1490,500 1568,490 1568,690 1450,700 1300,680 1180,700 1000,680 860,700 700,720 640,700 650,550"/>
<polygon class="R" points="655,360 690,400 760,400 850,440 870,550 915,550 910,430 950,370 975,420 990,470 1020,560 1568,560 1568,640 1450,640 1300,640 1180,630 1000,640 860,630 700,620 645,580"/>
</g>
<!-- region C -->
<g transform="translate(1858,91) scale(.6122,.3333)">
<polygon class="B" points="0,130 60,130 90,60 110,20 150,80 190,30 210,140 240,190 270,220 250,180 290,170 340,90 440,70 530,120 580,160 610,170 650,100 690,110 730,90 780,100 780,130 740,200 700,250 640,320 620,390 580,440 540,480 510,550 480,540 460,440 400,430 370,430 350,500 320,560 295,600 290,880 0,880"/>
<polygon class="C" points="0,160 50,220 90,160 120,100 150,190 200,210 250,230 300,290 320,230 340,160 440,130 540,170 610,210 660,160 660,210 640,280 600,370 560,430 520,510 500,530 480,500 470,430 400,415 370,425 340,500 300,570 290,880 0,880"/>
<polygon class="G" points="0,230 70,260 150,240 220,250 270,280 330,320 350,220 440,170 520,200 600,230 640,210 620,300 580,380 540,450 510,510 490,490 470,410 400,400 370,400 350,440 320,510 300,570 290,880 0,880"/>
<polygon class="L" points="0,290 100,290 200,290 280,310 330,350 370,310 450,240 560,260 620,240 590,340 550,430 510,500 490,480 470,400 400,380 350,420 310,530 295,590 285,850 0,850"/>
<polygon class="Y" points="0,330 90,310 200,300 280,320 320,390 330,470 300,560 290,770 0,760"/>
<polygon class="Y" points="450,290 490,310 530,390 510,490 490,470 480,390 450,350"/>
<polygon class="O" points="0,400 40,470 80,350 130,320 200,330 230,320 280,360 310,440 290,540 290,740 150,710 0,720"/>
<polygon class="O" points="505,470 520,470 515,520 505,520"/>
<polygon class="R" points="90,400 130,380 170,480 200,420 240,330 270,390 285,480 270,550 100,560"/>
<polygon class="R" points="0,580 290,570 270,680 130,650 100,640 0,660"/>
<polygon class="C" points="140,700 165,620 185,800 140,800"/>
<polygon class="C" points="190,700 210,720 240,810 200,810"/>
<polygon class="C" points="250,680 285,600 290,810 240,810"/>
<polygon style="fill:#0030e0" points="950,60 1030,60 1050,40 1120,110 1120,180 1090,220 1070,240 1050,190 1000,210 970,170 970,110"/>
<polygon style="fill:#0060f0" points="990,120 1110,130 1090,190 1000,190"/>
<polygon style="fill:#0030e0" points="1205,60 1280,50 1280,110 1235,160 1210,120"/>
<polygon style="fill:#0070f0" points="1220,70 1270,70 1260,110 1235,130"/>
<polygon class="B" points="620,420 680,420 680,510 640,520 620,480"/>
<polygon class="C" points="640,430 665,430 660,500 640,500"/>
<polygon class="C" points="695,425 725,425 710,530 700,490"/>
<polygon class="C" points="1160,440 1170,430 1185,570 1175,880 1155,880"/>
<polygon class="O" points="1165,510 1180,510 1180,680 1165,680"/>
<polygon class="C" points="1365,470 1385,470 1390,570 1390,880 1375,880"/>
<polygon class="C" points="1435,490 1450,490 1465,880 1430,880"/>
<polygon class="O" points="1442,570 1455,570 1455,790 1442,790"/>
<polygon class="Y" points="1465,420 1490,410 1485,500 1475,530"/>
<polygon class="B" points="1490,200 1530,215 1530,320 1500,430 1490,500"/>
<polygon class="C" points="1495,220 1522,225 1515,310 1500,420"/>
<polygon class="G" points="1505,240 1520,240 1515,290 1505,290"/>
</g>
</g>
<!-- bottom band -->
<g transform="translate(338,91) scale(.4847,.3333)">
<rect x="0" y="822" width="1568" height="14" class="k"/>
<rect x="20" y="815" width="200" height="7" fill="#ff9000"/>
<rect x="360" y="818" width="150" height="18" fill="#e0f030"/>
<rect x="650" y="818" width="150" height="18" fill="#e0f030"/>
<rect x="950" y="818" width="70" height="18" fill="#e0f030"/>
<rect x="1020" y="818" width="100" height="18" fill="#ff7000"/>
<rect x="1260" y="818" width="170" height="18" fill="#e0f030"/>
</g>
<g transform="translate(1098,91) scale(.4847,.3333)">
<rect x="0" y="820" width="1568" height="16" class="k"/>
<rect x="140" y="814" width="110" height="10" fill="#e04000"/>
<rect x="250" y="815" width="90" height="21" fill="#20d0d0"/>
<rect x="420" y="822" width="70" height="14" fill="#000"/>
<rect x="680" y="815" width="180" height="14" fill="#d0f030"/>
<rect x="860" y="815" width="180" height="10" fill="#d04000"/>
<rect x="1040" y="818" width="200" height="10" fill="#c0e030"/>
<rect x="1240" y="814" width="190" height="12" fill="#a00000"/>
<rect x="1430" y="818" width="138" height="10" fill="#e06000"/>
</g>
<g transform="translate(1858,91) scale(.6122,.3333)">
<rect x="0" y="818" width="1568" height="18" class="k"/>
<rect x="215" y="815" width="115" height="21" fill="#d0e030"/>
<rect x="340" y="800" width="50" height="16" fill="#00c0f0"/>
<rect x="490" y="798" width="50" height="18" fill="#ff9000"/>
<rect x="540" y="800" width="150" height="16" fill="#0040e0"/>
<rect x="690" y="800" width="70" height="16" fill="#30e0c0"/>
<rect x="940" y="815" width="200" height="21" fill="#30e0b0"/>
<rect x="1020" y="798" width="60" height="17" fill="#0040e0"/>
<rect x="1080" y="798" width="120" height="17" fill="#30e0d0"/>
<rect x="1200" y="798" width="140" height="17" fill="#ffc000"/>
</g>
<!-- red LIDAR dashes -->
<g transform="translate(338,91) scale(.4847,.3333)">
<polyline class="rd" points="140,5 190,15 280,5"/>
<polyline class="rd" points="290,5 350,20 370,50 400,45 430,30 470,50 510,40 530,75 550,70 575,10 600,5 680,15 720,40 730,20 780,10"/>
<polyline class="rd" points="790,30 795,430 880,435 905,480 925,530 925,570"/>
<polyline class="rd" points="930,430 970,420 975,20"/>
<polyline class="rd" points="1035,5 1040,450"/><polyline class="rd" points="1062,5 1062,380"/><polyline class="rd" points="1090,5 1080,390 1090,440"/>
<polyline class="rd" points="1300,5 1330,20 1350,60 1360,280 1370,340 1385,460 1395,460 1410,320 1430,320 1450,390 1490,410 1520,390 1545,340 1550,90 1568,85"/>
</g>
<g transform="translate(1098,91) scale(.4847,.3333)">
<polyline class="rd" points="50,60 10,120 20,270"/>
<polyline class="rd" points="850,10 880,40 900,70 915,80 945,75 945,40"/>
</g>
<g transform="translate(1858,91) scale(.6122,.3333)">
<polyline class="rd" points="20,5 20,130"/>
<polyline class="rd" points="250,70 250,20 290,20 340,15 420,30 470,45 530,60 570,70 600,130 610,160 640,130 665,65 720,85 790,75 795,400 805,435 860,440 885,430 890,20 960,20 1050,30 1125,60 1125,130"/>
<polyline class="rd" points="1145,40 1190,45 1220,10 1270,10 1280,50 1280,750 1305,770"/>
<polyline class="rd" points="1365,470 1385,470 1410,600 1440,490 1450,500"/>
<polyline class="rd" points="1450,440 1470,400 1490,380 1490,210 1500,180 1525,220"/>
</g>
</g>

<!-- DPR-KU PANEL -->
<g clip-path="url(#c2)">
<g transform="translate(1258,426)"><rect width="671" height="94" fill="#00009a" filter="url(#sp2)"/></g>
<g transform="translate(1258,426)"><rect width="62" height="52" fill="#00009a" filter="url(#sp2m)"/></g>
<g transform="translate(1258,519)"><rect width="671" height="94" fill="#00009a" filter="url(#sp2m)"/></g>
<g filter="url(#b3)">
<g transform="translate(1250,426) scale(.44,.3333)">
<polygon fill="#00009a" points="18,160 50,150 160,155 160,555 18,555"/>
<polygon fill="#0030e0" points="55,220 155,220 155,550 50,550"/>
<rect x="22" y="310" width="25" height="30" fill="#fff"/><rect x="20" y="400" width="35" height="60" fill="#fff"/><rect x="75" y="165" width="20" height="30" fill="#fff"/><rect x="120" y="170" width="12" height="30" fill="#fff"/><rect x="20" y="490" width="25" height="15" fill="#fff"/>
<polygon fill="#00009a" points="360,300 420,300 450,310 525,300 530,390 600,400 640,310 660,360 720,340 730,420 790,340 830,420 850,500 880,540 960,550 1130,530 1190,480 1300,430 1350,440 1420,380 1500,340 1540,340 1540,560 360,560"/>
<polygon fill="#0040e0" points="370,420 480,420 480,560 370,560"/>
<polygon fill="#00c0f0" points="380,480 470,480 470,555 380,555"/>
<polygon fill="#40f0b0" points="390,520 460,520 460,555 390,555"/>
<rect x="380" y="543" width="90" height="22" fill="#ff9000"/>
<rect x="490" y="470" width="130" height="95" fill="#0020d0"/>
<rect x="675" y="430" width="50" height="135" fill="#0060f0"/>
<rect x="680" y="490" width="40" height="75" fill="#00b0f0"/>
<rect x="730" y="420" width="60" height="100" fill="#0020d0"/>
<rect x="1190" y="510" width="350" height="55" fill="#0030e0"/>
<rect x="1195" y="530" width="95" height="35" fill="#00c0f0"/>
<rect x="1500" y="420" width="40" height="145" fill="#0080f0"/>
<rect x="18" y="565" width="17" height="200" fill="#60f0a0"/><rect x="35" y="565" width="20" height="200" fill="#0060ff"/><rect x="55" y="565" width="20" height="200" fill="#0040e0"/><rect x="75" y="565" width="20" height="200" fill="#00b0f0"/><rect x="95" y="565" width="15" height="200" fill="#0040e0"/><rect x="110" y="565" width="20" height="200" fill="#00d0e0"/><rect x="130" y="565" width="30" height="170" fill="#00009a"/>
<rect x="360" y="565" width="20" height="240" fill="#30f0d0"/><rect x="380" y="565" width="60" height="240" fill="#ffd000"/><rect x="440" y="565" width="30" height="240" fill="#ffa800"/><rect x="470" y="565" width="10" height="240" fill="#ffd000"/><rect x="480" y="565" width="20" height="240" fill="#30f0d0"/><rect x="500" y="565" width="60" height="240" fill="#0090f0"/><rect x="560" y="565" width="40" height="240" fill="#c0ff40"/><rect x="570" y="690" width="20" height="110" fill="#ffd000"/><rect x="600" y="565" width="20" height="240" fill="#50ffa0"/><rect x="620" y="565" width="30" height="240" fill="#0090ff"/><rect x="650" y="565" width="15" height="240" fill="#0000a0"/><rect x="665" y="565" width="15" height="240" fill="#0060ff"/><rect x="680" y="565" width="45" height="240" fill="#e0ff20"/><rect x="725" y="565" width="40" height="240" fill="#b0ff50"/><rect x="765" y="565" width="25" height="240" fill="#30d0e0"/><rect x="790" y="565" width="10" height="240" fill="#000090"/><rect x="800" y="565" width="30" height="240" fill="#00c0f0"/><rect x="830" y="565" width="50" height="240" fill="#0060f0"/><rect x="880" y="565" width="30" height="240" fill="#0040e0"/><rect x="910" y="565" width="40" height="240" fill="#0090f0"/><rect x="950" y="565" width="60" height="240" fill="#0000b0"/><rect x="1010" y="565" width="80" height="240" fill="#0020d0"/><rect x="1090" y="565" width="100" height="240" fill="#0000a0"/><rect x="1090" y="565" width="50" height="40" fill="#0070f0"/><rect x="1190" y="565" width="40" height="240" fill="#70ff90"/><rect x="1230" y="565" width="60" height="240" fill="#30e8d0"/><rect x="1290" y="565" width="50" height="240" fill="#00d0e8"/><rect x="1340" y="565" width="70" height="240" fill="#50ffa0"/><rect x="1410" y="565" width="30" height="240" fill="#0040e0"/><rect x="1440" y="565" width="30" height="240" fill="#0020c0"/><rect x="1470" y="565" width="40" height="240" fill="#00c0f0"/><rect x="1510" y="565" width="33" height="240" fill="#60ff90"/>
<rect x="380" y="565" width="100" height="32" fill="#ff8000"/>
<rect x="680" y="565" width="45" height="32" fill="#ff8000"/>
<rect x="1070" y="690" width="30" height="15" fill="#fff"/><rect x="1100" y="700" width="15" height="15" fill="#fff"/><rect x="1130" y="720" width="25" height="15" fill="#fff"/><rect x="1060" y="740" width="35" height="15" fill="#fff"/><rect x="1040" y="715" width="15" height="15" fill="#fff"/>
<rect x="18" y="740" width="142" height="22" fill="#d0f030"/><rect x="50" y="740" width="80" height="22" fill="#ffb000"/><rect x="160" y="740" width="90" height="30" fill="#50e080"/><rect x="250" y="760" width="90" height="12" fill="#ffb000"/>
<rect x="950" y="770" width="110" height="30" fill="#90f050"/><rect x="1030" y="782" width="30" height="12" fill="#ff3000"/><rect x="1190" y="772" width="70" height="16" fill="#d0f030"/><rect x="1290" y="758" width="110" height="14" fill="#ff9000"/><rect x="1400" y="742" width="100" height="20" fill="#c0ff40"/><rect x="1500" y="740" width="43" height="20" fill="#ff5000"/>
<polygon fill="#7f0000" points="18,760 160,760 250,770 340,770 360,785 470,785 470,795 620,795 620,815 880,815 950,805 1060,790 1190,785 1290,770 1400,760 1500,758 1543,758 1543,840 18,840"/>
<rect x="620" y="797" width="170" height="18" fill="#ff6000"/>
<rect x="800" y="815" width="80" height="12" fill="#ffb000"/>
</g>
</g>
<g transform="translate(1320,615)"><rect width="88" height="62" fill="#00009a" filter="url(#sp2d)"/></g>
<g transform="translate(1250,426) scale(.44,.3333)">
<polyline class="rd" points="590,5 625,35 650,85 685,85 692,5"/>
<polyline class="rd" points="1415,5 1412,130"/>
</g>
</g>

<!-- DPR-KA PANEL -->
<g clip-path="url(#c3)">
<g transform="translate(1429,761)"><rect width="328" height="189" fill="#0000a0" filter="url(#sp3)"/></g>
<g transform="translate(1429,860)"><rect width="110" height="90" fill="#0000a0" filter="url(#sp3d)"/></g>
<g transform="translate(1429,890)"><rect width="150" height="60" fill="#0000b0" filter="url(#sp3d)"/></g>
<g transform="translate(1380,750) scale(.3333)">
<polygon fill="#0000a8" points="148,440 200,420 260,430 340,440 400,430 470,420 560,470 620,520 700,596 148,596"/>
<polygon fill="#0060ff" points="148,510 230,520 230,596 148,596"/>
<rect x="270" y="470" width="40" height="25" fill="#fff"/><rect x="440" y="490" width="70" height="15" fill="#fff"/><rect x="300" y="555" width="30" height="15" fill="#fff"/><rect x="600" y="530" width="50" height="14" fill="#fff"/><rect x="465" y="570" width="25" height="20" fill="#fff"/>
<rect x="860" y="700" width="70" height="50" fill="#fff"/><rect x="870" y="770" width="50" height="40" fill="#fff"/>
<rect x="950" y="730" width="20" height="80" fill="#fff"/><rect x="1020" y="710" width="60" height="50" fill="#fff"/>
<rect x="980" y="780" width="25" height="30" fill="#fff"/>
<rect x="148" y="835" width="182" height="20" fill="#ffe000"/>
<rect x="330" y="835" width="330" height="20" fill="#50ffa0"/>
<rect x="660" y="825" width="40" height="40" fill="#00c8f0"/>
<rect x="730" y="825" width="80" height="35" fill="#0080ff"/>
<polygon fill="#7f0000" points="148,855 930,855 930,835 1020,830 1130,825 1130,870 148,870"/>
<polyline class="rd" points="385,35 430,60 465,120 520,120 525,35"/>
<polyline class="rd" style="stroke-width:7" points="1475,35 1475,160"/>
</g>
<rect x="1350" y="761" width="5" height="4" fill="#f00"/>
</g>

<!-- Surface class bars -->
<g fill="#000">
<rect x="338" y="1431" width="920" height="18"/><rect x="1419" y="1431" width="124" height="18"/><rect x="1660" y="1431" width="16" height="18"/><rect x="1683" y="1431" width="381" height="18"/>
<rect x="2438" y="1468" width="365" height="21"/>
<rect x="1258" y="1671" width="161" height="19"/><rect x="1543" y="1671" width="117" height="19"/><rect x="1676" y="1671" width="6" height="19"/><rect x="2064" y="1671" width="72" height="19"/>
<rect x="2136" y="1650" width="302" height="21"/>
</g>
<path fill="none" stroke="#bdbdbd" stroke-width="3" d="M338 1442H2803M338 1460H2803M338 1481H2803M338 1502H2803M338 1521H2803M338 1542H2803M338 1562H2803M338 1580H2803M338 1601H2803M338 1622H2803M338 1641H2803M338 1661H2803M338 1681H2803M338 1700H2803"/>

<!-- surface line -->
<g fill="none" stroke="#000" stroke-width="4" stroke-linejoin="round">
<polyline transform="translate(0,370)" points="2110,-1 2146,-1.5 2158,-17 2170,-6 2183,-2.4 2188,-5 2195,-1 2534,-1 2679,-2.4 2690,-11 2705,-3.5 2715,-8 2752,-4 2783,-6 2793,-7 2803,-6"/>
<polyline transform="translate(0,704)" points="2110,-1 2146,-1.5 2158,-17 2170,-6 2183,-2.4 2188,-5 2195,-1 2534,-1 2679,-2.4 2690,-11 2705,-3.5 2715,-8 2752,-4 2783,-6 2793,-7 2803,-6"/>
<polyline transform="translate(0,1039)" points="2110,-1 2146,-1.5 2158,-17 2170,-6 2183,-2.4 2188,-5 2195,-1 2534,-1 2679,-2.4 2690,-11 2705,-3.5 2715,-8 2752,-4 2783,-6 2793,-7 2803,-6"/>
<polyline transform="translate(0,1039)" points="1290,-1 1305,-4 1315,-4 1326,-1"/>
</g>

<!-- grid -->
<path fill="none" stroke="#b4b4b4" stroke-width="2" d="M584.5 91V370M831 91V370M1077.5 91V370M1324 91V370M1570.5 91V370M1817 91V370M2063.5 91V370M2310 91V370M2556.5 91V370
M584.5 426V704M831 426V704M1077.5 426V704M1324 426V704M1570.5 426V704M1817 426V704M2063.5 426V704M2310 426V704M2556.5 426V704
M584.5 761V1039M831 761V1039M1077.5 761V1039M1324 761V1039M1570.5 761V1039M1817 761V1039M2063.5 761V1039M2310 761V1039M2556.5 761V1039
M584.5 1097V1376M831 1097V1376M1077.5 1097V1376M1324 1097V1376M1570.5 1097V1376M1817 1097V1376M2063.5 1097V1376M2310 1097V1376M2556.5 1097V1376
M584.5 1431V1711M831 1431V1711M1077.5 1431V1711M1324 1431V1711M1570.5 1431V1711M1817 1431V1711M2063.5 1431V1711M2310 1431V1711M2556.5 1431V1711
M584.5 1767V2046M831 1767V2046M1077.5 1767V2046M1324 1767V2046M1570.5 1767V2046M1817 1767V2046M2063.5 1767V2046M2310 1767V2046M2556.5 1767V2046"/>
<path fill="none" stroke="#c4c4c4" stroke-width="3" d="M338 184H2803M338 277H2803M338 519H2803M338 611H2803M338 854H2803M338 946H2803"/>

<!-- T=273 -->
<g fill="none" stroke="#1414f0" stroke-width="6" stroke-dasharray="23 10">
<polyline transform="translate(0,277)" points="338,5 441,6.5 454,3 584,6.5 593,1.6 727,5 736,1.6 879,5 888,1.6 1030,5 1039,0 1182,5 1196,1.6 1325,5 1470,4 1480,2 1620,5 1630,2 1780,5 1790,2 1934,5 2100,7 2110,3 2307,7 2322,3 2555,6 2565,1 2803,4"/>
<polyline transform="translate(0,611)" points="338,5 441,6.5 454,3 584,6.5 593,1.6 727,5 736,1.6 879,5 888,1.6 1030,5 1039,0 1182,5 1196,1.6 1325,5 1470,4 1480,2 1620,5 1630,2 1780,5 1790,2 1934,5 2100,7 2110,3 2307,7 2322,3 2555,6 2565,1 2803,4"/>
<polyline transform="translate(0,946)" points="338,5 441,6.5 454,3 584,6.5 593,1.6 727,5 736,1.6 879,5 888,1.6 1030,5 1039,0 1182,5 1196,1.6 1325,5 1470,4 1480,2 1620,5 1630,2 1780,5 1790,2 1934,5 2100,7 2110,3 2307,7 2322,3 2555,6 2565,1 2803,4"/>
</g>

<!-- spines -->
<g fill="none">
<path stroke="#555" stroke-width="3" d="M338 91H2803M338 370H2803M338 426H2803M338 704H2803M338 761H2803M338 1039H2803M338 1097H2803M338 1376H2803M338 1431H2803M338 1711H2803M338 1767H2803M338 2046H2803"/>
<path stroke="#333" stroke-width="2" d="M338 91V370M2803 91V370M338 426V704M2803 426V704M338 761V1039M2803 761V1039M338 1097V1376M2803 1097V1376M338 1431V1711M2803 1431V1711M338 1767V2046M2803 1767V2046"/>
<path stroke="#222" stroke-width="2" d="M338 370v8M584.5 370v8M831 370v8M1077.5 370v8M1324 370v8M1570.5 370v8M1817 370v8M2063.5 370v8M2310 370v8M2556.5 370v8M2803 370v8
M338 704v8M584.5 704v8M831 704v8M1077.5 704v8M1324 704v8M1570.5 704v8M1817 704v8M2063.5 704v8M2310 704v8M2556.5 704v8M2803 704v8
M338 1039v8M584.5 1039v8M831 1039v8M1077.5 1039v8M1324 1039v8M1570.5 1039v8M1817 1039v8M2063.5 1039v8M2310 1039v8M2556.5 1039v8M2803 1039v8
M338 1376v8M584.5 1376v8M831 1376v8M1077.5 1376v8M1324 1376v8M1570.5 1376v8M1817 1376v8M2063.5 1376v8M2310 1376v8M2556.5 1376v8M2803 1376v8
M338 1711v8M584.5 1711v8M831 1711v8M1077.5 1711v8M1324 1711v8M1570.5 1711v8M1817 1711v8M2063.5 1711v8M2310 1711v8M2556.5 1711v8M2803 1711v8
M338 2046v8M584.5 2046v8M831 2046v8M1077.5 2046v8M1324 2046v8M1570.5 2046v8M1817 2046v8M2063.5 2046v8M2310 2046v8M2556.5 2046v8M2803 2046v8
M330 91h8M330 184h8M330 277h8M330 370h8M330 426h8M330 519h8M330 611h8M330 704h8M330 761h8M330 854h8M330 946h8M330 1039h8
M330 1106h8M330 1126h8M330 1147h8M330 1169h8M330 1191h8M330 1213h8M330 1235h8M330 1255h8M330 1278h8M330 1299h8M330 1321h8M330 1343h8M330 1366h8
M330 1442h8M330 1460h8M330 1481h8M330 1502h8M330 1521h8M330 1542h8M330 1562h8M330 1580h8M330 1601h8M330 1622h8M330 1641h8M330 1661h8M330 1681h8M330 1700h8
M330 1780h8M330 1803h8M330 1831h8M330 1855h8M330 1882h8M330 1907h8M330 1932h8M330 1957h8M330 1982h8M330 2008h8M330 2033h8"/>
</g>

<!-- colorbars -->
<g stroke="#222" stroke-width="1">
<rect x="2957" y="91" width="16" height="279" fill="url(#jet)"/>
<rect x="2957" y="426" width="16" height="278" fill="url(#jet)"/>
<rect x="2957" y="761" width="16" height="278" fill="url(#jet)"/>
<rect x="2957" y="1097" width="16" height="279" fill="url(#jet)"/>
<rect x="2957" y="1431" width="16" height="280" fill="url(#gry)"/>
<rect x="2957" y="1767" width="16" height="280" fill="url(#jet)"/>
</g>
<path fill="none" stroke="#222" stroke-width="2" d="M2973 91h7M2973 151h7M2973 208h7M2973 266h7M2973 324h7M2973 426h7M2973 482h7M2973 538h7M2973 594h7M2973 650h7M2973 704h7M2973 761h7M2973 817h7M2973 873h7M2973 929h7M2973 985h7M2973 1039h7M2973 1097h7M2973 1186h7M2973 1272h7M2973 1359h7M2973 1431h7M2973 1490h7M2973 1545h7M2973 1601h7M2973 1656h7M2973 1711h7M2973 1767h7M2973 1825h7M2973 1881h7M2973 1937h7M2973 1993h7M2973 2047h7"/>

<g class="cb">
<text class="cb" x="2989" y="100">20</text><text class="cb" x="2989" y="160">10</text><text class="cb" x="2989" y="217">0</text><text class="cb" x="2989" y="275">−10</text><text class="cb" x="2989" y="333">−20</text>
<text class="cb" x="2989" y="435">40</text><text class="cb" x="2989" y="491">35</text><text class="cb" x="2989" y="547">30</text><text class="cb" x="2989" y="603">25</text><text class="cb" x="2989" y="659">20</text><text class="cb" x="2989" y="713">15</text>
<text class="cb" x="2989" y="770">40</text><text class="cb" x="2989" y="826">35</text><text class="cb" x="2989" y="882">30</text><text class="cb" x="2989" y="938">25</text><text class="cb" x="2989" y="994">20</text><text class="cb" x="2989" y="1048">15</text>
<text class="cb" x="2989" y="1106">300</text><text class="cb" x="2989" y="1195">250</text><text class="cb" x="2989" y="1281">200</text><text class="cb" x="2989" y="1368">150</text>
<text class="cb" x="2989" y="1440">1.0</text><text class="cb" x="2989" y="1499">0.8</text><text class="cb" x="2989" y="1554">0.6</text><text class="cb" x="2989" y="1610">0.4</text><text class="cb" x="2989" y="1665">0.2</text><text class="cb" x="2989" y="1720">0.0</text>
<text class="cb" x="2989" y="1776">300</text><text class="cb" x="2989" y="1834">280</text><text class="cb" x="2989" y="1890">260</text><text class="cb" x="2989" y="1946">240</text><text class="cb" x="2989" y="2002">220</text><text class="cb" x="2989" y="2056">200</text>
</g>
<text class="cl" transform="translate(3069,235) rotate(-90)" textLength="272" lengthAdjust="spacingAndGlyphs">dB (uncorrected)</text>
<text class="cl" transform="translate(3050,568) rotate(-90)" textLength="271" lengthAdjust="spacingAndGlyphs">dB (uncorrected)</text>
<text class="cl" transform="translate(3050,903) rotate(-90)" textLength="271" lengthAdjust="spacingAndGlyphs">dB (uncorrected)</text>
<text class="cl" transform="translate(3066,1238) rotate(-90)" textLength="183" lengthAdjust="spacingAndGlyphs">GMI TB (K)</text>
<text class="cl" transform="translate(3066,1910) rotate(-90)" textLength="233" lengthAdjust="spacingAndGlyphs">MODIS TB (K)</text>

<!-- y axis labels -->
<text class="yl" transform="translate(254,233) rotate(-90)" textLength="197" lengthAdjust="spacingAndGlyphs">Height (km)</text>
<text class="yl" transform="translate(254,567) rotate(-90)" textLength="197" lengthAdjust="spacingAndGlyphs">Height (km)</text>
<text class="yl" transform="translate(254,902) rotate(-90)" textLength="197" lengthAdjust="spacingAndGlyphs">Height (km)</text>

<text class="yt" x="320" y="109">15</text><text class="yt" x="320" y="199">10</text><text class="yt" x="320" y="292">5</text><text class="yt" x="320" y="385">0</text>
<text class="yt" x="320" y="444">15</text><text class="yt" x="320" y="534">10</text><text class="yt" x="320" y="626">5</text><text class="yt" x="320" y="719">0</text>
<text class="yt" x="320" y="779">15</text><text class="yt" x="320" y="869">10</text><text class="yt" x="320" y="961">5</text><text class="yt" x="320" y="1054">0</text>

<!-- x tick labels -->
<text class="tk" y="416"><tspan x="338">0</tspan><tspan x="584.5">154</tspan><tspan x="831">308</tspan><tspan x="1077.5">462</tspan><tspan x="1324">616</tspan><tspan x="1570.5">770</tspan><tspan x="1817">924</tspan><tspan x="2063.5">1078</tspan><tspan x="2310">1232</tspan><tspan x="2556.5">1386</tspan><tspan x="2803">1540</tspan></text>
<text class="tk" y="751"><tspan x="338">0</tspan><tspan x="584.5">154</tspan><tspan x="831">308</tspan><tspan x="1077.5">462</tspan><tspan x="1324">616</tspan><tspan x="1570.5">770</tspan><tspan x="1817">924</tspan><tspan x="2063.5">1078</tspan><tspan x="2310">1232</tspan><tspan x="2556.5">1386</tspan><tspan x="2803">1540</tspan></text>
<text class="tk" y="1086"><tspan x="338">0</tspan><tspan x="584.5">154</tspan><tspan x="831">308</tspan><tspan x="1077.5">462</tspan><tspan x="1324">616</tspan><tspan x="1570.5">770</tspan><tspan x="1817">924</tspan><tspan x="2063.5">1078</tspan><tspan x="2310">1232</tspan><tspan x="2556.5">1386</tspan><tspan x="2803">1540</tspan></text>
<text class="tk" y="1421"><tspan x="338">0</tspan><tspan x="584.5">154</tspan><tspan x="831">308</tspan><tspan x="1077.5">462</tspan><tspan x="1324">616</tspan><tspan x="1570.5">770</tspan><tspan x="1817">924</tspan><tspan x="2063.5">1078</tspan><tspan x="2310">1232</tspan><tspan x="2556.5">1386</tspan><tspan x="2803">1540</tspan></text>
<text class="tk" y="1757"><tspan x="338">0</tspan><tspan x="584.5">154</tspan><tspan x="831">308</tspan><tspan x="1077.5">462</tspan><tspan x="1324">616</tspan><tspan x="1570.5">770</tspan><tspan x="1817">924</tspan><tspan x="2063.5">1078</tspan><tspan x="2310">1232</tspan><tspan x="2556.5">1386</tspan><tspan x="2803">1540</tspan></text>
<text class="tk" y="2093"><tspan x="338">0</tspan><tspan x="584.5">154</tspan><tspan x="831">308</tspan><tspan x="1077.5">462</tspan><tspan x="1324">616</tspan><tspan x="1570.5">770</tspan><tspan x="1817">924</tspan><tspan x="2063.5">1078</tspan><tspan x="2310">1232</tspan><tspan x="2556.5">1386</tspan><tspan x="2803">1540</tspan></text>

<!-- GMI labels -->
<text class="gl" x="330" y="1117">10V</text><text class="gl" x="330" y="1137">10H</text><text class="gl" x="330" y="1158">18V</text><text class="gl" x="330" y="1180">18H</text><text class="gl" x="330" y="1202">23V</text><text class="gl" x="330" y="1224">36V</text><text class="gl" x="330" y="1246">36H</text><text class="gl" x="330" y="1266">89V</text><text class="gl" x="330" y="1289">89H</text><text class="gl" x="330" y="1310">166V</text><text class="gl" x="330" y="1332">166H</text><text class="gl" x="330" y="1354" textLength="98" lengthAdjust="spacingAndGlyphs">183±3</text><text class="gl" x="330" y="1377" textLength="98" lengthAdjust="spacingAndGlyphs">183±7</text>

<!-- Surface labels -->
<text class="sl" x="330" y="1453">Ocean</text><text class="sl" x="330" y="1471">Sea Ice</text><text class="sl" x="330" y="1492">Heavy Vegetation</text><text class="sl" x="330" y="1572">Light Vegetation</text><text class="sl" x="330" y="1591">Heavy Snow Cover</text><text class="sl" x="330" y="1651">Light Snow Cover</text><text class="sl" x="330" y="1672">Standing Water</text><text class="sl" x="330" y="1692">Coast</text><text class="sl" x="330" y="1711">Sea Ice Edge</text>

<!-- MODIS labels -->
<text class="ml" x="329" y="1791">20</text><text class="ml" x="329" y="1814">27</text><text class="ml" x="329" y="1842">28</text><text class="ml" x="329" y="1866">29</text><text class="ml" x="329" y="1893">30</text><text class="ml" x="329" y="1918">31</text><text class="ml" x="329" y="1943">32</text><text class="ml" x="329" y="1968">33</text><text class="ml" x="329" y="1993">34</text><text class="ml" x="329" y="2019">35</text><text class="ml" x="329" y="2044">36</text>

<!-- panel captions -->
<text class="bl" x="354" y="138" textLength="181" lengthAdjust="spacingAndGlyphs">CloudSat</text>
<text class="li" x="354" y="171" textLength="253" lengthAdjust="spacingAndGlyphs">LIDAR cloud top</text>
<text class="tt" x="356" y="274" textLength="121" lengthAdjust="spacingAndGlyphs">T=273 K</text>
<text class="bl" x="354" y="472" textLength="155" lengthAdjust="spacingAndGlyphs">DPR-Ku</text>
<text class="li" x="354" y="504" textLength="253" lengthAdjust="spacingAndGlyphs">LIDAR cloud top</text>
<text class="tt" x="356" y="608" textLength="121" lengthAdjust="spacingAndGlyphs">T=273 K</text>
<text class="bl" x="354" y="807" textLength="152" lengthAdjust="spacingAndGlyphs">DPR-Ka</text>
<text class="li" x="354" y="840" textLength="253" lengthAdjust="spacingAndGlyphs">LIDAR cloud top</text>
<text class="tt" x="356" y="943" textLength="121" lengthAdjust="spacingAndGlyphs">T=273 K</text>
<text class="bl" x="354" y="1172" textLength="77" lengthAdjust="spacingAndGlyphs">GMI</text>
<text class="bl" x="354" y="1482" textLength="394" lengthAdjust="spacingAndGlyphs">Surface Class Index</text>
<text class="bl" x="356" y="1833" textLength="130" lengthAdjust="spacingAndGlyphs">MODIS</text>

<!-- title -->
<text x="901" y="77" style="font:bold 41px 'Liberation Sans',sans-serif;white-space:pre;fill:#111" xml:space="preserve" textLength="1339" lengthAdjust="spacingAndGlyphs">2015/04/26 06:06:24 - 06:10:31   (-7.145442, 115.723061)  ΔT= 582 sec</text>
<text x="1198" y="2126" style="font:bold 38px 'Liberation Sans',sans-serif;fill:#111" textLength="741" lengthAdjust="spacingAndGlyphs">CloudSat Ray Index Across the GMI Swath</text>
</svg>
</div></body></html>
